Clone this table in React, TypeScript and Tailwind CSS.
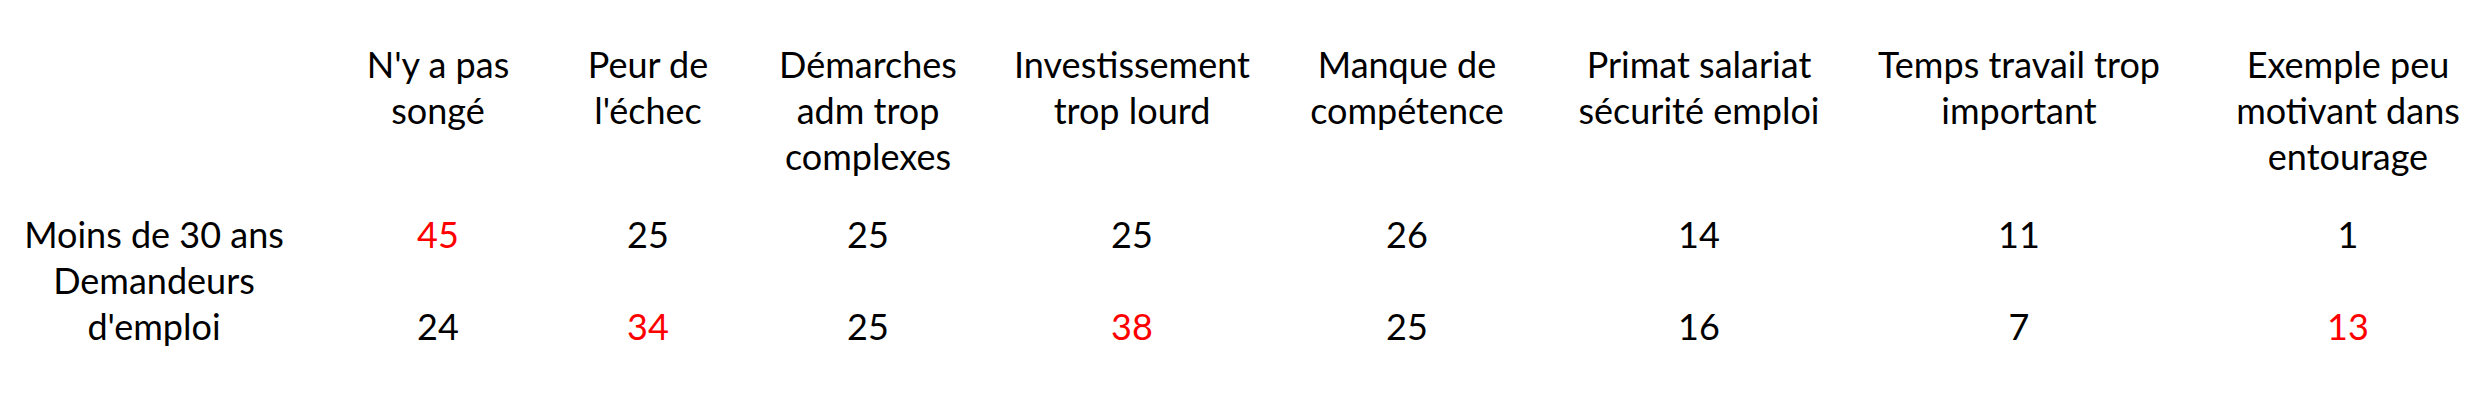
import React from "react";

type Cell = { v: string; red?: boolean };

const headers: string[][] = [
  ["N'y a pas", "songé"],
  ["Peur de", "l'échec"],
  ["Démarches", "adm trop", "complexes"],
  ["Investissement", "trop lourd"],
  ["Manque de", "compétence"],
  ["Primat salariat", "sécurité emploi"],
  ["Temps travail trop", "important"],
  ["Exemple peu", "motivant dans", "entourage"],
];

const row1: Cell[] = [
  { v: "45", red: true },
  { v: "25" },
  { v: "25" },
  { v: "25" },
  { v: "26" },
  { v: "14" },
  { v: "11" },
  { v: "1" },
];

const row2: Cell[] = [
  { v: "24" },
  { v: "34", red: true },
  { v: "25" },
  { v: "38", red: true },
  { v: "25" },
  { v: "16" },
  { v: "7" },
  { v: "13", red: true },
];

const colClass = [
  "",
  "",
  "",
  "",
  "",
  "",
  "",
  "pl-[24px]",
];

export default function App() {
  return (
    <div
      className="w-[2474px] h-[420px] bg-white text-black overflow-hidden pt-[41px] text-[36px] leading-[46px]"
      style={{ fontFamily: "Lato, 'Open Sans', sans-serif" }}
    >
      <div className="grid grid-cols-[308px_260px_160px_280px_248px_302px_282px_358px_276px]">
        {/* header row */}
        <div />
        {headers.map((h, i) => (
          <div
            key={"h" + i}
            className={`flex flex-col items-center whitespace-nowrap ${colClass[i]}`}
          >
            {h.map((line, j) => (
              <span key={j}>{line}</span>
            ))}
          </div>
        ))}

        {/* row 1 */}
        <div className="mt-[32px] flex justify-center whitespace-nowrap">
          Moins de 30 ans
        </div>
        {row1.map((c, i) => (
          <div
            key={"r1" + i}
            className={`mt-[32px] flex justify-center ${colClass[i]} ${
              c.red ? "text-[#ff0000]" : ""
            }`}
          >
            {c.v}
          </div>
        ))}

        {/* row 2 */}
        <div className="flex flex-col items-center whitespace-nowrap">
          <span>Demandeurs</span>
          <span>d'emploi</span>
        </div>
        {row2.map((c, i) => (
          <div
            key={"r2" + i}
            className={`flex items-end justify-center ${colClass[i]} ${
              c.red ? "text-[#ff0000]" : ""
            }`}
          >
            {c.v}
          </div>
        ))}
      </div>
    </div>
  );
}
